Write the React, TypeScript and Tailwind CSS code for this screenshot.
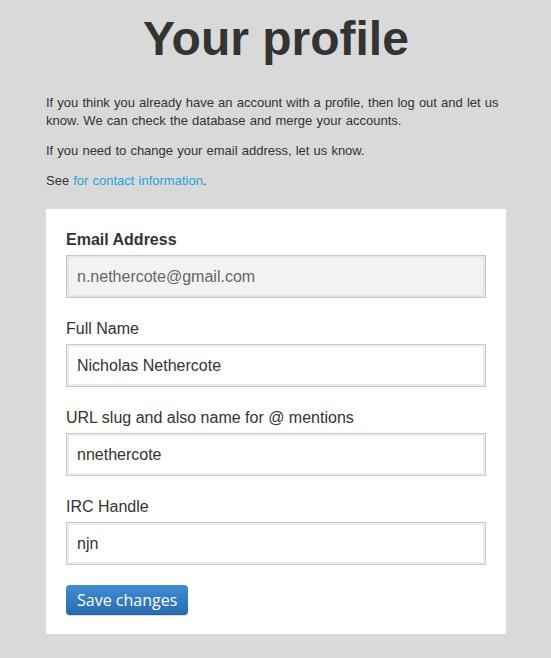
export default function App() {
  const fields = [
    { label: 'Full Name', value: 'Nicholas Nethercote' },
    { label: 'URL slug and also name for @ mentions', value: 'nnethercote' },
    { label: 'IRC Handle', value: 'njn' },
  ]

  return (
    <div className="min-h-[658px] bg-[#d9d9d9] font-['Liberation_Sans',Arial,sans-serif] text-[#333]">
      <div className="w-[460px] ml-[46px] pb-6">
        <h1 className="pt-[9px] text-center text-[48px] leading-[60px] font-bold text-[#333]">Your profile</h1>

        <div className="mt-[25px] text-[13px] leading-[18px] space-y-[12px] [word-spacing:0.5px]">
          <p>
            If you think you already have an account with a profile, then log out and let us know. We can check the
            database and merge your accounts.
          </p>
          <p>If you need to change your email address, let us know.</p>
          <p>
            See <a className="text-[#1fa3dc]">for contact information</a>.
          </p>
        </div>

        <form className="mt-[19px] bg-white px-5 pt-[21px] pb-[19px]">
          <label className="block text-[16px] leading-5 font-bold">Email Address</label>
          <input
            disabled
            value="n.nethercote@gmail.com"
            className="mt-[5px] block w-[420px] h-[43px] px-[10px] text-[16px] text-[#666] bg-[#f3f3f3] border border-[#c8c8c8] shadow-[inset_0_0_0_2px_#e6e6e6] outline-none"
          />

          {fields.map(f => (
            <div key={f.label} className="mt-[21px]">
              <label className="block text-[16px] leading-5">{f.label}</label>
              <input
                defaultValue={f.value}
                className="mt-[5px] block w-[420px] h-[43px] px-[10px] text-[16px] text-[#333] bg-white border border-[#c8c8c8] shadow-[inset_0_0_0_2px_#ececec] outline-none"
              />
            </div>
          ))}

          <button
            type="button"
            className="mt-[20px] block h-[30px] px-[11px] rounded-[4px] bg-gradient-to-b from-[#3f8dd6] to-[#2a6cb0] border-b border-[#245d99] text-white font-['Open_Sans',sans-serif] text-[16px] leading-[28px] shadow-[0_1px_1px_rgba(0,0,0,0.15)]"
          >
            Save changes
          </button>
        </form>
      </div>
    </div>
  )
}
